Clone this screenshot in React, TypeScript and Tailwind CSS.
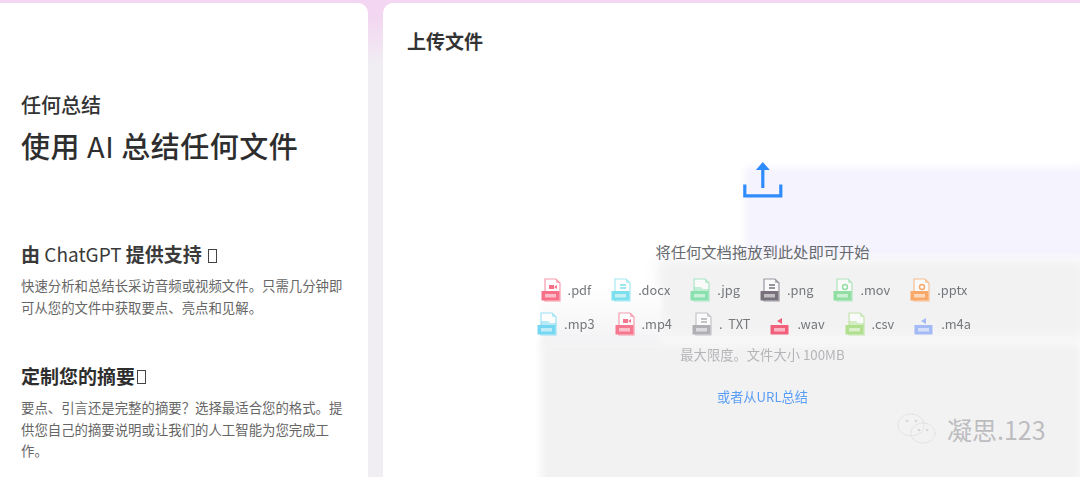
const font = "font-['Noto_Sans_CJK_SC','Inter',sans-serif]";

type Kind = "lines" | "video" | "folder" | "image" | "none";

function FileIcon({ color, kind }: { color: string; kind: Kind }) {
  return (
    <svg width="21" height="24" viewBox="0 0 21 24" className="shrink-0 opacity-90 blur-[0.5px]">
      {kind !== "none" ? (
        <>
          <path d="M4 1h11l4 4v18H4z" fill="#ffffff" stroke={color} strokeWidth="1.2" opacity="0.7" />
          <path d="M15 1v4h4z" fill={color} opacity="0.45" />
        </>
      ) : null}
      {kind === "lines" ? <path d="M9 7h6M9 10h6" stroke={color} strokeWidth="1.3" /> : null}
      {kind === "video" ? <path d="M8 7h5v4H8zM13 9l3-2v4z" fill={color} /> : null}
      {kind === "image" ? <circle cx="12" cy="9" r="2.5" fill="none" stroke={color} strokeWidth="1.4" /> : null}
      {kind === "folder" ? <path d="M4 9h7l2 2h6v4H4z" fill={color} opacity="0.5" /> : null}
      {kind === "none" ? <path d="M7 9l5-3v6z" fill={color} /> : null}
      <rect x="0.5" y="13" width="18" height="9.5" rx="0.5" fill={color} />
      <rect x="4" y="16" width="11" height="3.5" fill="#ffffff" opacity="0.55" />
    </svg>
  );
}

function FileType({ label, color, kind }: { label: string; color: string; kind: Kind }) {
  return (
    <div className="flex items-center gap-[6px]">
      <FileIcon color={color} kind={kind} />
      <span className="whitespace-pre text-[12.8px] leading-none text-[#74787c] blur-[0.3px]">{label}</span>
    </div>
  );
}

function Missing() {
  return <span className="ml-[2px] inline-block h-[14px] w-[9px] translate-y-[1px] border border-[#444444]" />;
}

export default function App() {
  return (
    <div className={`relative flex h-[477px] w-[1080px] gap-[15px] overflow-hidden bg-gradient-to-b from-[#f3d6f1] from-[3%] to-[#f0eef3] to-[14%] pt-[3px] ${font}`}>
      <div className="flex h-[520px] w-[368px] shrink-0 flex-col rounded-tr-[10px] bg-white pl-[21px] pt-[89px]">
        <h2 className="text-[20px] font-medium leading-[26px] text-[#333333]">任何总结</h2>
        <h1 className="mt-[8px] text-[29px] font-medium leading-[38px] tracking-[0.5px] text-[#2e2e2e]">使用 <span className="font-normal">AI</span> 总结任何文件</h1>
        <h3 className="mt-[78px] text-[19px] font-semibold leading-[24px] text-[#3a3a3a]">
          由 <span className="font-normal">ChatGPT</span> 提供支持 <Missing />
        </h3>
        <p className="mt-[9px] w-[330px] text-[13.4px] leading-[21.5px] text-[#666666]">快速分析和总结长采访音频或视频文件。只需几分钟即可从您的文件中获取要点、亮点和见解。</p>
        <h3 className="mt-[45px] flex items-center text-[19px] font-semibold leading-[26px] text-[#2e2e2e]">
          定制您的摘要<Missing />
        </h3>
        <p className="mt-[8px] w-[330px] text-[13.4px] leading-[21.5px] text-[#666666]">要点、引言还是完整的摘要？选择最适合您的格式。提供您自己的摘要说明或让我们的人工智能为您完成工作。</p>
      </div>

      <div className="relative flex h-[520px] flex-1 flex-col rounded-tl-[10px] bg-white">
        <div className="pl-[24px] pt-[25px] text-[19px] font-semibold leading-[26px] text-[#333333]">上传文件</div>

        <div className="pointer-events-none absolute left-[362px] top-[164px] h-[90px] w-[340px] bg-[#f5f3fd] blur-[3px]" />
        <div className="pointer-events-none absolute left-[274px] top-[256px] h-[80px] w-[430px] bg-[#f2f2f3] blur-[6px]" />
        <div className="pointer-events-none absolute left-[158px] top-[285px] h-[60px] w-[120px] bg-gradient-to-b from-white to-[#f2f2f4] blur-[3px]" />
        <div className="pointer-events-none absolute left-[158px] top-[340px] h-[180px] w-[540px] bg-[#f2f2f3] blur-[4px]" />

        <div className="relative flex w-[759px] flex-col items-center">
          <svg width="40" height="36" viewBox="0 0 40 36" className="mt-[108px]" fill="none" stroke="#2f8cff" strokeWidth="3.2">
            <path d="M1.8 24v9.8h36V24" strokeLinecap="square" />
            <path d="M19.8 26V6" />
            <path d="M19.8 0l7 8h-14z" fill="#2f8cff" stroke="none" />
          </svg>
          <div className="mt-[43px] text-[15.3px] leading-[20px] text-[#666a6e]">将任何文档拖放到此处即可开始</div>

          <div className="mt-[16px] flex h-[26px] w-full items-center justify-center gap-[20px] pr-[17px]">
            <FileType label=".pdf" color="#f7617c" kind="video" />
            <FileType label=".docx" color="#6fdcec" kind="lines" />
            <FileType label=".jpg" color="#7fe0a8" kind="folder" />
            <FileType label=".png" color="#6b6470" kind="lines" />
            <FileType label=".mov" color="#86dc9a" kind="image" />
            <FileType label=".pptx" color="#f9a25c" kind="image" />
          </div>
          <div className="mt-[8px] flex h-[26px] w-full items-center justify-center gap-[20px] pr-[17px]">
            <FileType label=".mp3" color="#68d4f2" kind="folder" />
            <FileType label=".mp4" color="#f56b84" kind="video" />
            <FileType label=".  TXT" color="#aaa8ae" kind="lines" />
            <FileType label=".wav" color="#f2506e" kind="none" />
            <FileType label=".csv" color="#a9de84" kind="folder" />
            <FileType label=".m4a" color="#9cb4f5" kind="none" />
          </div>

          <div className="mt-[9px] text-[13.3px] leading-[18px] text-[#b5b5b8] blur-[0.4px]">最大限度。文件大小 100MB</div>
          <div className="mt-[24px] text-[13.2px] leading-[18px] text-[#5b9ef5] blur-[0.2px]">或者从URL总结</div>
        </div>

        <div className="absolute left-[514px] top-[409px] flex items-center gap-[10px]">
          <svg width="40" height="34" viewBox="0 0 40 34" fill="none" stroke="#d8d8d8" strokeWidth="1" strokeDasharray="1.5 1">
            <ellipse cx="14" cy="13" rx="13" ry="11" />
            <ellipse cx="26" cy="21" rx="12" ry="10" />
            <circle cx="10" cy="9" r="1" fill="#cfcfcf" />
            <circle cx="19" cy="9" r="1" fill="#cfcfcf" />
            <circle cx="22" cy="18" r="1" fill="#cfcfcf" />
            <circle cx="30" cy="18" r="1" fill="#cfcfcf" />
          </svg>
          <span className="text-[25px] leading-[30px] text-[#bdbdc0]">凝思.123</span>
        </div>
      </div>
    </div>
  );
}
